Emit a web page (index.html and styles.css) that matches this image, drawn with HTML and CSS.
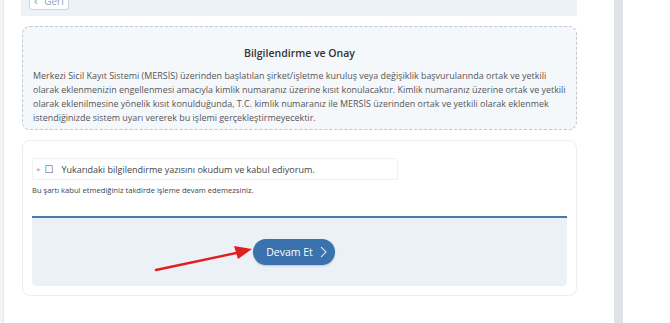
FILE: index.html
```html
<!DOCTYPE html>
<html lang="tr">
<head>
  <meta charset="UTF-8">
  <meta name="viewport" content="width=device-width, initial-scale=1">
  <title>Bilgilendirme ve Onay</title>
  <link rel="stylesheet" href="styles.css">
</head>
<body>
  <div class="page">
    <div class="edge"></div>

    <main class="main">
      <div class="topbar">
        <button class="back-btn"><span class="chev">&lsaquo;</span> Geri</button>
      </div>

      <section class="info-box">
        <h2 class="info-title">Bilgilendirme ve Onay</h2>
        <p class="info-text">Merkezi Sicil Kayıt Sistemi (MERSİS) üzerinden başlatılan şirket/işletme kuruluş veya değişiklik başvurularında ortak ve yetkili<br>
          olarak eklenmenizin engellenmesi amacıyla kimlik numaranız üzerine kısıt konulacaktır. Kimlik numaranız üzerine ortak ve yetkili<br>
          olarak eklenilmesine yönelik kısıt konulduğunda, T.C. kimlik numaranız ile MERSİS üzerinden ortak ve yetkili olarak eklenmek<br>
          istendiğinizde sistem uyarı vererek bu işlemi gerçekleştirmeyecektir.</p>
      </section>

      <section class="card">
        <div class="check-field">
          <span class="req">*</span>
          <span class="box">&#9744;</span>
          <span>Yukarıdaki bilgilendirme yazısını okudum ve kabul ediyorum.</span>
        </div>
        <div class="hint">Bu şartı kabul etmediğiniz takdirde işleme devam edemezsiniz.</div>

        <div class="actions">
          <button class="next-btn">Devam Et
            <svg width="7" height="12" viewBox="0 0 7 12"><path d="M1 1l5 5-5 5" fill="none" stroke="#cfe0f2" stroke-width="1.1"/></svg>
          </button>
          <svg class="arrow" width="110" height="30" viewBox="0 0 110 30">
            <line x1="3" y1="26" x2="88" y2="8" stroke="#e0201c" stroke-width="2.4" stroke-linecap="round"/>
            <path d="M81 2 L99 5 L85 15 Z" fill="#e0201c"/>
          </svg>
        </div>
      </section>
    </main>

    <div class="scroll"></div>
  </div>
</body>
</html>
```

FILE: styles.css
```css
html, body {
  margin: 0;
  height: 100%;
  overflow: hidden;
  background: #fff;
}
body {
  font-family: "Open Sans", "Noto Sans", sans-serif;
  color: #555;
}
.page {
  display: flex;
  height: 100%;
}
.edge {
  width: 3px;
  background: #f1f3f6;
  border-right: 1px solid #e6e9ed;
}
.main {
  width: 556px;
  padding: 0 18px 0 17px;
}
.topbar {
  height: 16px;
  background: #edf2f8;
  display: flex;
  align-items: flex-end;
  padding: 0 0 6px 8px;
  box-sizing: border-box;
}
.back-btn {
  height: 20px;
  width: 40px;
  background: #fff;
  border: 1px solid #c9d5e4;
  border-radius: 3px;
  color: #8ca3c2;
  font: 10px "Open Sans", sans-serif;
  padding: 0 0 0 4px;
  text-align: left;
  flex: none;
}
.back-btn .chev {
  font-size: 12px;
  margin-right: 4px;
}
.info-box {
  margin: 10px 0 0 1px;
  height: 104px;
  box-sizing: border-box;
  background: #f5f8fb;
  border: 1px dashed #c3c8ce;
  border-radius: 8px;
  padding: 18px 4px 0 10px;
}
.info-title {
  margin: 0;
  padding-right: 6px;
  text-align: center;
  font-size: 10.5px;
  font-weight: 600;
  line-height: 16px;
  color: #333;
}
.info-text {
  margin: 8px 0 0;
  font-size: 8.95px;
  line-height: 13.9px;
  white-space: nowrap;
  color: #555;
}
.card {
  margin: 10px 0 0 1px;
  height: 156px;
  box-sizing: border-box;
  border: 1px solid #eceef1;
  border-radius: 8px;
  padding: 17px 9px 0 9px;
}
.check-field {
  width: 366px;
  height: 22px;
  box-sizing: border-box;
  border: 1px solid #eff1f3;
  border-radius: 2px;
  display: flex;
  align-items: center;
  gap: 4px;
  padding-left: 3px;
  font-size: 9px;
  color: #444;
}
.check-field .req {
  color: #999;
  font-size: 8px;
}
.check-field .box {
  font-family: "DejaVu Sans", sans-serif;
  font-size: 10px;
  color: #555;
  margin-right: 4px;
}
.hint {
  margin-top: 5px;
  font-size: 7.6px;
  color: #444;
}
.actions {
  position: relative;
  margin-top: 21px;
  height: 70px;
  background: #ecf1f8;
  border-top: 2px solid #4a7aa7;
  border-radius: 0 0 4px 4px;
  display: flex;
  justify-content: center;
  align-items: flex-start;
  padding-top: 21px;
  box-sizing: border-box;
}
.next-btn {
  margin-right: 12px;
  width: 82px;
  height: 26px;
  border: 0;
  border-radius: 13px;
  background: #3a72ad;
  box-shadow: 0 1px 2px rgba(0, 0, 0, 0.2);
  color: #fff;
  font: 10.5px "Open Sans", sans-serif;
  display: flex;
  align-items: center;
  justify-content: center;
  gap: 7px;
  padding: 0 0 0 6px;
}
.arrow {
  position: absolute;
  left: 121px;
  top: 26px;
}
.scroll {
  margin-left: 19px;
  width: 9px;
  background: #dfe3e8;
}
```
